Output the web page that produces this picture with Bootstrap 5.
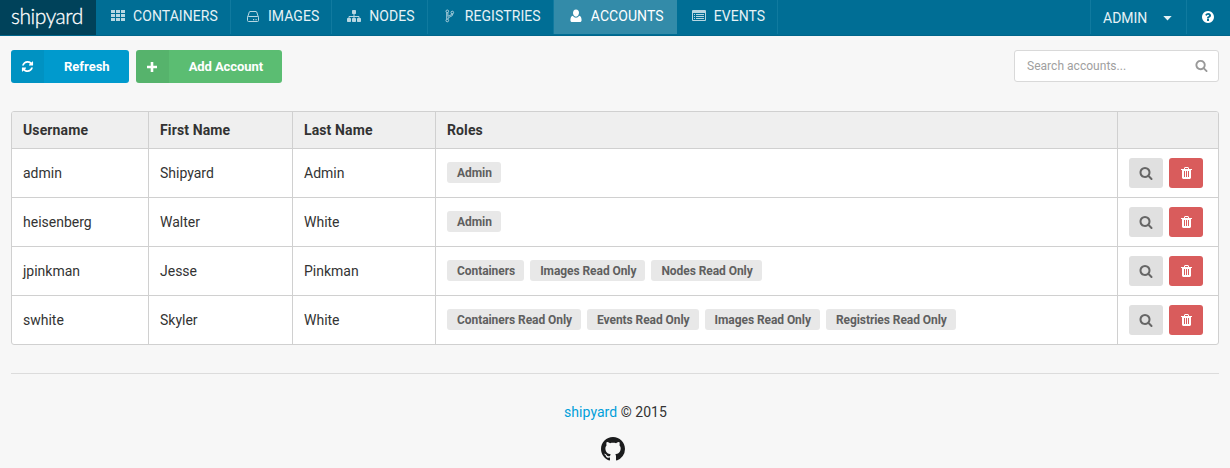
<!DOCTYPE html>
<html lang="en">
<head>
<meta charset="utf-8">
<meta name="viewport" content="width=device-width, initial-scale=1">
<title>Shipyard - Accounts</title>
<link href="https://cdn.jsdelivr.net/npm/bootstrap@5.3.0/dist/css/bootstrap.min.css" rel="stylesheet">
<style>
body{font-family:Roboto,sans-serif;font-size:14px;line-height:18px;color:#333;background:#f7f7f7;overflow:hidden}
svg{display:block;fill:currentColor}
.topbar{height:36px;background:#006e95;border-bottom:1px solid #00668b;color:#e6f2f6}
.brand{width:96px;height:35px;padding:0 0 3px 11px;background:#00425a;color:#fff;font:300 21px/32px Lato,sans-serif;letter-spacing:-.45px;-webkit-text-stroke:.3px #fff;text-decoration:none}
.menu-item{height:34px;padding:0 12px 2px 15px;border-right:1px solid #107a9f;color:#e6f2f6;text-decoration:none;letter-spacing:.07px}
.menu-item svg{width:14px;height:14px;margin-right:8px;opacity:.8}
.menu-item.active{background:#338ba9;border-color:#338ba9;color:#fff}
.menu-item.active svg{opacity:1}
.menu-right{height:34px;border-left:1px solid #107a9f}
.user-menu{width:96px;padding:2px 14px 0 12px}
.help{width:44px;padding-left:14px;color:#fff}
.act{height:33px;border-radius:3px;font-weight:700;font-size:13px;color:#fff;border:0;padding:0;overflow:hidden}
.act .ico{width:33px;height:33px;background:rgba(0,0,0,.05)}
.act .txt{padding:0 19px 0 20px}
.act-blue{background:#009acd}
.act-green{background:#5bbd72;letter-spacing:-.07px}
.search{width:205px;height:32px;background:#fff;border:1px solid #d9d9d9;border-radius:3px;padding:0 10px 0 12px;color:#999}
.search input{width:150px;border:0;outline:0;padding:0;font-size:12px;background:none;letter-spacing:.03px}
.search input::placeholder{color:#a0a0a0;opacity:1}
.search svg{margin-bottom:2px}
.users{border:1px solid #d0d0d0;border-radius:3px;overflow:hidden;background:#fff;margin-top:28px}
.users table{width:100%;table-layout:fixed;border-collapse:separate;border-spacing:0}
.users th{height:36px;background:#efefef;padding:0 11px;letter-spacing:.12px}
.users td{height:49px;border-top:1px solid #d0d0d0;padding:0 11px}
.users th+th,.users td+td{border-left:1px solid #d0d0d0}
.roles{gap:6px;padding-bottom:2px}
.role{height:21px;line-height:22px;padding:0 9px 0 10px;background:#e8e8e8;border-radius:3px;font-size:12px;font-weight:700;color:#5f5f5f;letter-spacing:-.065px}
.sq{width:34px;height:30px;border:0;border-radius:3px;padding:0}
.sq-gray{background:#e0e0e0;color:#666}
.sq-red{background:#d95c5c;color:#fff}
.foot{border-top:1px solid #dcdcdc;margin-top:28px;padding-top:29px}
.foot a{color:#009fda;text-decoration:none}
.foot .copy{letter-spacing:.04px;padding-left:1px}
.foot .gh{color:#1b1c1d;margin-top:16px;padding-right:4px;width:28px}
</style>
</head>
<body>
<svg width="0" height="0" class="position-absolute" aria-hidden="true">
<symbol id="search" viewBox="0 0 1792 1792"><path d="M1216 832q0-185-131.500-316.500t-316.500-131.500-316.500 131.500-131.500 316.500 131.500 316.500 316.500 131.500 316.500-131.500 131.500-316.500zm512 832q0 52-38 90t-90 38q-54 0-90-38l-343-342q-179 124-399 124-143 0-273.500-55.500t-225-150-150-225-55.500-273.500 55.500-273.500 150-225 225-150 273.500-55.500 273.500 55.500 225 150 150 225 55.500 273.500q0 220-124 399l343 343q37 37 37 90z"/></symbol>
<symbol id="trash" viewBox="0 0 11 12"><path fill-rule="evenodd" d="M4 0h3l1 1v1h3v1h-1v8l-1 1H2l-1-1V3H0V2h3V1zM4 1v1h3V1zM3 4v6h1V4zM5 4v6h1V4zM7 4v6h1V4z"/></symbol>
</svg>
<nav class="topbar d-flex justify-content-between">
  <div class="d-flex">
    <a class="brand" href="#">shipyard</a>
    <a class="menu-item d-flex align-items-center" href="#"><svg viewBox="0 0 14 14"><path d="M0 1h4v3H0zM5 1h4v3H5zM10 1h4v3h-4zM0 5h4v3H0zM5 5h4v3H5zM10 5h4v3h-4zM0 9h4v3H0zM5 9h4v3H5zM10 9h4v3h-4z"/></svg>CONTAINERS</a>
    <a class="menu-item d-flex align-items-center" href="#"><svg viewBox="0 0 14 14"><path fill="none" stroke="currentColor" d="M1.500 8.500 3.300 3q.2-.5.700-.5h6q.500 0 .700.500l1.800 5.500v3q0 1-1 1h-9q-1 0-1-1v-3q0-1 1-1h9q1 0 1 1"/><path d="M7 10h1.200v1.200H7zM9.500 10h1.200v1.200H9.500z"/></svg>IMAGES</a>
    <a class="menu-item d-flex align-items-center" href="#"><svg viewBox="0 0 14 14"><rect x="5" y="1" width="4" height="4" rx=".7"/><rect y="9" width="4" height="4" rx=".7"/><rect x="5" y="9" width="4" height="4" rx=".7"/><rect x="10" y="9" width="4" height="4" rx=".7"/><path fill="none" stroke="currentColor" d="M7 5v5M2 10V7.500h10V10"/></svg>NODES</a>
    <a class="menu-item d-flex align-items-center" href="#"><svg viewBox="0 0 14 14"><g fill="none" stroke="currentColor" stroke-width=".9"><circle cx="4.300" cy="2.300" r="1.300"/><circle cx="9.300" cy="3.500" r="1.300"/><circle cx="4.300" cy="11.500" r="1.300"/><path d="M3.700 3.500v6.700M4.900 3.500v4q.6-.7 2-1 1.800-.5 1.800-1.800M9.900 4.700q0 2.300-2.600 3-2.400.6-2.400 2.500"/></g></svg>REGISTRIES</a>
    <a class="menu-item active d-flex align-items-center" href="#"><svg viewBox="0 0 14 14"><path d="M7 .5c2 0 3 1.500 3 3.300S8.800 7.700 7 7.700 4 5.900 4 4.100 5 .5 7 .5zM3.700 6.800Q5.200 8.700 7 8.700t3.300-1.900c1.600.2 2.300 2.400 2.300 4.400 0 1.200-.9 1.900-2 1.900H3.400c-1.100 0-2-.7-2-1.900 0-2 .7-4.200 2.300-4.400z"/></svg>ACCOUNTS</a>
    <a class="menu-item d-flex align-items-center" href="#"><svg viewBox="0 0 14 14"><path fill-rule="evenodd" d="M1 1h12q1 0 1 1v9q0 1-1 1H1q-1 0-1-1V2q0-1 1-1zM1 4v7h12V4zM2 5h1v1H2zM4 5h8v1H4zM2 7h1v1H2zM4 7h8v1H4zM2 9h1v1H2zM4 9h8v1H4z"/></svg>EVENTS</a>
  </div>
  <div class="d-flex">
    <div class="menu-right user-menu d-flex align-items-center justify-content-between"><span>ADMIN</span><svg width="9" height="5" viewBox="0 0 9 5" fill="#fff"><path d="M.3 0h8.400L4.500 4.500z"/></svg></div>
    <div class="menu-right help d-flex align-items-center"><svg width="14" height="14" viewBox="0 0 1792 1792"><path d="M1024 1376v-192q0-14-9-23t-23-9h-192q-14 0-23 9t-9 23v192q0 14 9 23t23 9h192q14 0 23-9t9-23zm256-672q0-88-55.500-163t-138.500-116-170-41q-243 0-371 213-15 24 8 42l132 100q7 6 19 6 16 0 25-12 53-68 86-92 34-24 86-24 48 0 85.500 26t37.500 59q0 38-20 61t-68 45q-63 28-115.500 86.500t-52.500 125.500v36q0 14 9 23t23 9h192q14 0 23-9t9-23q0-19 21.500-49.500t54.500-49.500q32-18 49-28.500t46-35 44.500-48 28-60.500 12.500-81zm384 192q0 209-103 385.500t-279.500 279.500-385.500 103-385.500-103-279.500-279.500-103-385.500 103-385.500 279.500-279.500 385.500-103 385.500 103 279.500 279.500 103 385.500z"/></svg></div>
  </div>
</nav>
<main class="mx-auto" style="width:calc(100% - 22px)">
  <div class="d-flex justify-content-between" style="padding-top:14px">
    <div class="d-flex">
      <button class="act act-blue d-flex align-items-center"><span class="ico d-flex align-items-center justify-content-center"><svg width="13" height="13" viewBox="0 0 1792 1792"><path d="M1639 1056q0 5-1 7-64 268-268 434.500t-478 166.500q-146 0-282.500-55t-243.500-157l-129 129q-19 19-45 19t-45-19-19-45v-448q0-26 19-45t45-19h448q26 0 45 19t19 45-19 45l-137 137q71 66 161 102t187 36q134 0 250-65t186-179q11-17 53-117 8-23 30-23h192q13 0 22.500 9.500t9.500 22.500zm25-800v448q0 26-19 45t-45 19h-448q-26 0-45-19t-19-45 19-45l138-138q-148-137-349-137-134 0-250 65t-186 179q-11 17-53 117-8 23-30 23h-199q-13 0-22.500-9.500t-9.500-22.500v-7q65-268 270-434.500t480-166.500q146 0 284 55.500t245 156.500l130-129q19-19 45-19t45 19 19 45z"/></svg></span><span class="txt">Refresh</span></button>
      <button class="act act-green d-flex align-items-center" style="margin-left:7px"><span class="ico d-flex align-items-center justify-content-center"><svg width="10" height="10" viewBox="0 0 10 10"><path d="M3.700 0h2.600v3.700H10v2.600H6.300V10H3.700V6.300H0V3.700h3.700z"/></svg></span><span class="txt">Add Account</span></button>
    </div>
    <div class="search d-flex align-items-center justify-content-between"><input placeholder="Search accounts..." aria-label="Search accounts"><svg width="13" height="13"><use href="#search"/></svg></div>
  </div>
  <div class="users">
    <table>
      <colgroup><col style="width:136px"><col style="width:144px"><col style="width:143px"><col><col style="width:101px"></colgroup>
      <thead><tr><th>Username</th><th>First Name</th><th>Last Name</th><th>Roles</th><th></th></tr></thead>
      <tbody id="rows"></tbody>
    </table>
  </div>
  <footer class="foot text-center">
    <div class="copy"><a href="#">shipyard</a> © 2015</div>
    <svg class="gh mx-auto" height="24" viewBox="0 0 16 16"><path d="M8 0C3.580 0 0 3.580 0 8c0 3.540 2.290 6.530 5.470 7.590.4.070.550-.17.550-.38 0-.19-.01-.82-.01-1.490-2.010.370-2.530-.49-2.690-.94-.09-.23-.48-.94-.82-1.130-.28-.15-.68-.52-.01-.53.630-.01 1.080.580 1.230.820.720 1.210 1.870.870 2.330.660.070-.52.280-.87.510-1.070-1.780-.2-3.640-.89-3.640-3.950 0-.87.310-1.590.820-2.150-.08-.2-.36-1.020.080-2.120 0 0 .670-.21 2.200.820.640-.18 1.320-.27 2-.27s1.360.090 2 .270c1.530-1.040 2.200-.82 2.200-.82.440 1.100.160 1.920.080 2.120.510.560.820 1.270.820 2.150 0 3.070-1.870 3.750-3.650 3.950.290.250.540.730.540 1.480 0 1.070-.01 1.930-.01 2.200 0 .210.150.460.550.380A8.010 8.010 0 0 0 16 8c0-4.420-3.580-8-8-8z"/></svg>
  </footer>
</main>
<script src="https://cdn.jsdelivr.net/npm/bootstrap@5.3.0/dist/js/bootstrap.bundle.min.js"></script>
<script>
const accounts = [
  ['admin','Shipyard','Admin',['Admin']],
  ['heisenberg','Walter','White',['Admin']],
  ['jpinkman','Jesse','Pinkman',['Containers','Images Read Only','Nodes Read Only']],
  ['swhite','Skyler','White',['Containers Read Only','Events Read Only','Images Read Only','Registries Read Only']]
];
document.getElementById('rows').innerHTML = accounts.map(([u, f, l, roles]) => `<tr>
<td>${u}</td><td>${f}</td><td>${l}</td>
<td><div class="roles d-flex">${roles.map(r => `<span class="role">${r}</span>`).join('')}</div></td>
<td><div class="d-flex" style="gap:6px">
<button class="sq sq-gray d-flex align-items-center justify-content-center" aria-label="View"><svg width="14" height="14"><use href="#search"/></svg></button>
<button class="sq sq-red d-flex align-items-center justify-content-center" aria-label="Delete"><svg width="11" height="12"><use href="#trash"/></svg></button>
</div></td></tr>`).join('');
</script>
</body>
</html>
